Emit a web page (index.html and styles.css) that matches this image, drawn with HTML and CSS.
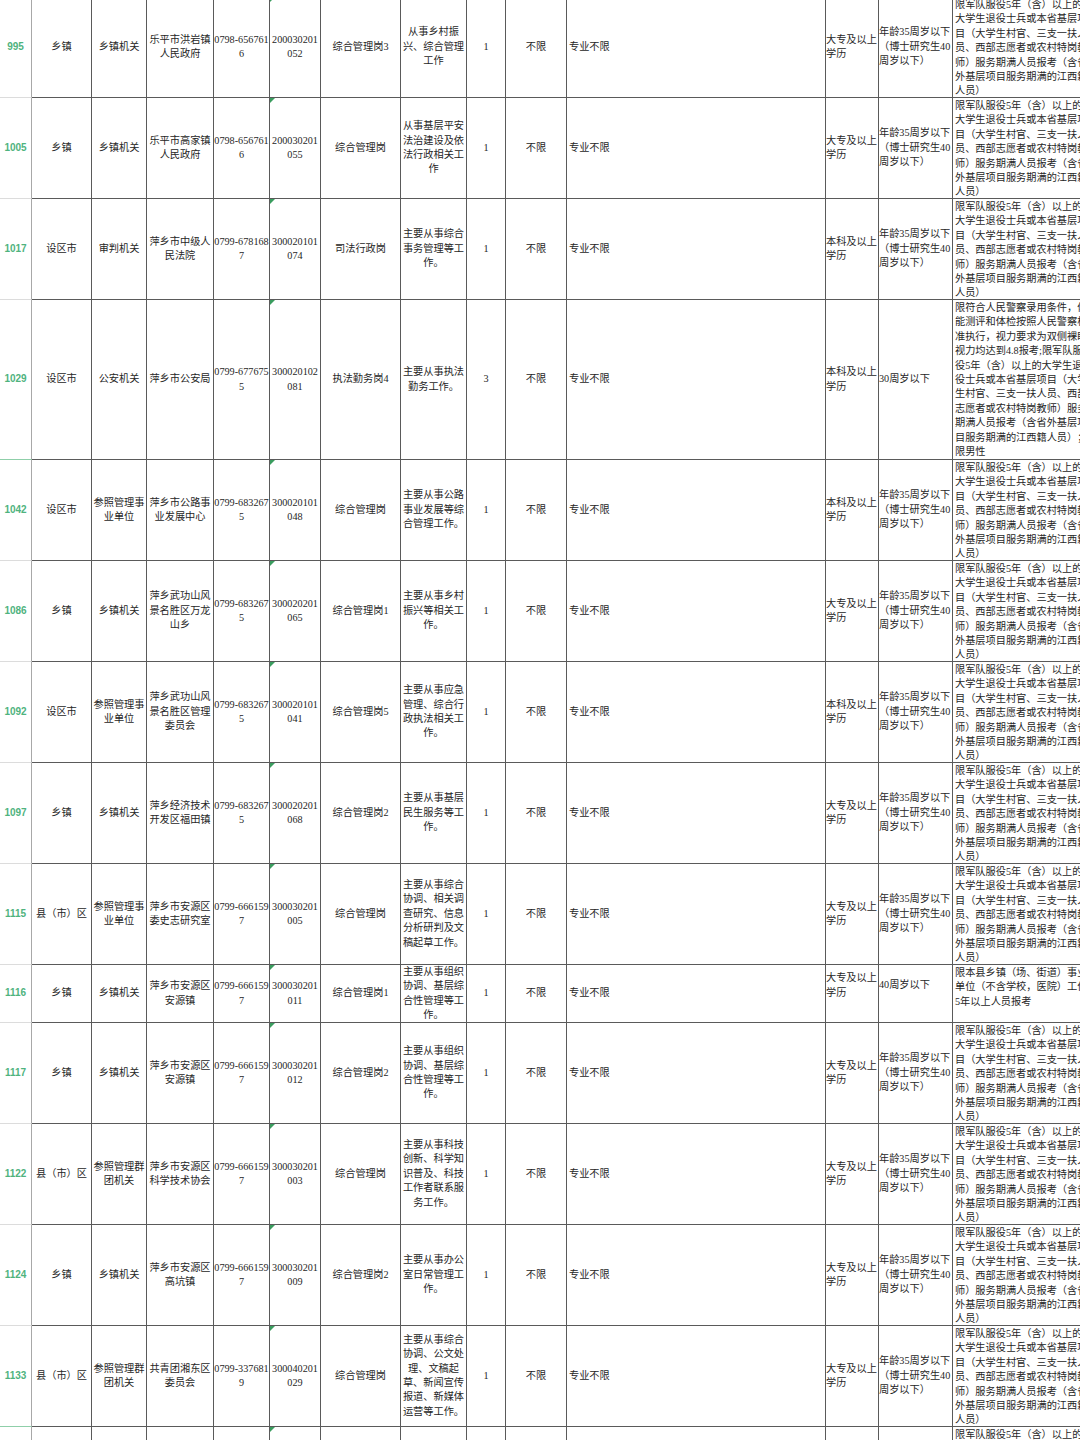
FILE: index.html
```html
<!DOCTYPE html>
<html lang="zh-CN">
<head>
<meta charset="utf-8">
<title>职位表</title>
<link rel="stylesheet" href="styles.css">
</head>
<body>
<div class="sheet">

  <div class="row">
    <div class="c n">995</div><div class="c">乡镇</div><div class="c">乡镇机关</div><div class="c">乐平市洪岩镇人民政府</div><div class="c num">0798-6567616</div><div class="c num code">200030201052</div><div class="c">综合管理岗3</div><div class="c">从事乡村振兴、综合管理工作</div><div class="c">1</div><div class="c">不限</div><div class="c l">专业不限</div><div class="c l0">大专及以上学历</div><div class="c l0">年龄35周岁以下（博士研究生40周岁以下）</div><div class="c t">限军队服役5年（含）以上的大学生退役士兵或本省基层项目（大学生村官、三支一扶人员、西部志愿者或农村特岗教师）服务期满人员报考（含省外基层项目服务期满的江西籍人员）</div>
  </div>

  <div class="row">
    <div class="c n">1005</div><div class="c">乡镇</div><div class="c">乡镇机关</div><div class="c">乐平市高家镇人民政府</div><div class="c num">0798-6567616</div><div class="c num code">200030201055</div><div class="c">综合管理岗</div><div class="c">从事基层平安法治建设及依法行政相关工作</div><div class="c">1</div><div class="c">不限</div><div class="c l">专业不限</div><div class="c l0">大专及以上学历</div><div class="c l0">年龄35周岁以下（博士研究生40周岁以下）</div><div class="c t">限军队服役5年（含）以上的大学生退役士兵或本省基层项目（大学生村官、三支一扶人员、西部志愿者或农村特岗教师）服务期满人员报考（含省外基层项目服务期满的江西籍人员）</div>
  </div>

  <div class="row">
    <div class="c n">1017</div><div class="c">设区市</div><div class="c">审判机关</div><div class="c">萍乡市中级人民法院</div><div class="c num">0799-6781687</div><div class="c num code">300020101074</div><div class="c">司法行政岗</div><div class="c">主要从事综合事务管理等工作。</div><div class="c">1</div><div class="c">不限</div><div class="c l">专业不限</div><div class="c l0">本科及以上学历</div><div class="c l0">年龄35周岁以下（博士研究生40周岁以下）</div><div class="c t">限军队服役5年（含）以上的大学生退役士兵或本省基层项目（大学生村官、三支一扶人员、西部志愿者或农村特岗教师）服务期满人员报考（含省外基层项目服务期满的江西籍人员）</div>
  </div>

  <div class="row tall">
    <div class="c n sel">1029</div><div class="c">设区市</div><div class="c">公安机关</div><div class="c">萍乡市公安局</div><div class="c num">0799-6776755</div><div class="c num code">300020102081</div><div class="c">执法勤务岗4</div><div class="c">主要从事执法勤务工作。</div><div class="c">3</div><div class="c">不限</div><div class="c l">专业不限</div><div class="c l0">本科及以上学历</div><div class="c l0">30周岁以下</div><div class="c t">限符合人民警察录用条件，体能测评和体检按照人民警察标准执行，视力要求为双侧裸眼视力均达到4.8报考;限军队服役5年（含）以上的大学生退役士兵或本省基层项目（大学生村官、三支一扶人员、西部志愿者或农村特岗教师）服务期满人员报考（含省外基层项目服务期满的江西籍人员）；限男性</div>
  </div>

  <div class="row">
    <div class="c n">1042</div><div class="c">设区市</div><div class="c">参照管理事业单位</div><div class="c">萍乡市公路事业发展中心</div><div class="c num">0799-6832675</div><div class="c num code">300020101048</div><div class="c">综合管理岗</div><div class="c">主要从事公路事业发展等综合管理工作。</div><div class="c">1</div><div class="c">不限</div><div class="c l">专业不限</div><div class="c l0">本科及以上学历</div><div class="c l0">年龄35周岁以下（博士研究生40周岁以下）</div><div class="c t">限军队服役5年（含）以上的大学生退役士兵或本省基层项目（大学生村官、三支一扶人员、西部志愿者或农村特岗教师）服务期满人员报考（含省外基层项目服务期满的江西籍人员）</div>
  </div>

  <div class="row">
    <div class="c n">1086</div><div class="c">乡镇</div><div class="c">乡镇机关</div><div class="c">萍乡武功山风景名胜区万龙山乡</div><div class="c num">0799-6832675</div><div class="c num code">300020201065</div><div class="c">综合管理岗1</div><div class="c">主要从事乡村振兴等相关工作。</div><div class="c">1</div><div class="c">不限</div><div class="c l">专业不限</div><div class="c l0">大专及以上学历</div><div class="c l0">年龄35周岁以下（博士研究生40周岁以下）</div><div class="c t">限军队服役5年（含）以上的大学生退役士兵或本省基层项目（大学生村官、三支一扶人员、西部志愿者或农村特岗教师）服务期满人员报考（含省外基层项目服务期满的江西籍人员）</div>
  </div>

  <div class="row">
    <div class="c n">1092</div><div class="c">设区市</div><div class="c">参照管理事业单位</div><div class="c">萍乡武功山风景名胜区管理委员会</div><div class="c num">0799-6832675</div><div class="c num code">300020101041</div><div class="c">综合管理岗5</div><div class="c">主要从事应急管理、综合行政执法相关工作。</div><div class="c">1</div><div class="c">不限</div><div class="c l">专业不限</div><div class="c l0">本科及以上学历</div><div class="c l0">年龄35周岁以下（博士研究生40周岁以下）</div><div class="c t">限军队服役5年（含）以上的大学生退役士兵或本省基层项目（大学生村官、三支一扶人员、西部志愿者或农村特岗教师）服务期满人员报考（含省外基层项目服务期满的江西籍人员）</div>
  </div>

  <div class="row">
    <div class="c n">1097</div><div class="c">乡镇</div><div class="c">乡镇机关</div><div class="c">萍乡经济技术开发区福田镇</div><div class="c num">0799-6832675</div><div class="c num code">300020201068</div><div class="c">综合管理岗2</div><div class="c">主要从事基层民生服务等工作。</div><div class="c">1</div><div class="c">不限</div><div class="c l">专业不限</div><div class="c l0">大专及以上学历</div><div class="c l0">年龄35周岁以下（博士研究生40周岁以下）</div><div class="c t">限军队服役5年（含）以上的大学生退役士兵或本省基层项目（大学生村官、三支一扶人员、西部志愿者或农村特岗教师）服务期满人员报考（含省外基层项目服务期满的江西籍人员）</div>
  </div>

  <div class="row">
    <div class="c n">1115</div><div class="c">县（市）区</div><div class="c">参照管理事业单位</div><div class="c">萍乡市安源区委史志研究室</div><div class="c num">0799-6661597</div><div class="c num code">300030201005</div><div class="c">综合管理岗</div><div class="c">主要从事综合协调、相关调查研究、信息分析研判及文稿起草工作。</div><div class="c">1</div><div class="c">不限</div><div class="c l">专业不限</div><div class="c l0">大专及以上学历</div><div class="c l0">年龄35周岁以下（博士研究生40周岁以下）</div><div class="c t">限军队服役5年（含）以上的大学生退役士兵或本省基层项目（大学生村官、三支一扶人员、西部志愿者或农村特岗教师）服务期满人员报考（含省外基层项目服务期满的江西籍人员）</div>
  </div>

  <div class="row short">
    <div class="c n">1116</div><div class="c">乡镇</div><div class="c">乡镇机关</div><div class="c">萍乡市安源区安源镇</div><div class="c num">0799-6661597</div><div class="c num code">300030201011</div><div class="c">综合管理岗1</div><div class="c">主要从事组织协调、基层综合性管理等工作。</div><div class="c">1</div><div class="c">不限</div><div class="c l">专业不限</div><div class="c l0">大专及以上学历</div><div class="c l0">40周岁以下</div><div class="c t">限本县乡镇（场、街道）事业单位（不含学校，医院）工作5年以上人员报考</div>
  </div>

  <div class="row">
    <div class="c n">1117</div><div class="c">乡镇</div><div class="c">乡镇机关</div><div class="c">萍乡市安源区安源镇</div><div class="c num">0799-6661597</div><div class="c num code">300030201012</div><div class="c">综合管理岗2</div><div class="c">主要从事组织协调、基层综合性管理等工作。</div><div class="c">1</div><div class="c">不限</div><div class="c l">专业不限</div><div class="c l0">大专及以上学历</div><div class="c l0">年龄35周岁以下（博士研究生40周岁以下）</div><div class="c t">限军队服役5年（含）以上的大学生退役士兵或本省基层项目（大学生村官、三支一扶人员、西部志愿者或农村特岗教师）服务期满人员报考（含省外基层项目服务期满的江西籍人员）</div>
  </div>

  <div class="row">
    <div class="c n">1122</div><div class="c">县（市）区</div><div class="c">参照管理群团机关</div><div class="c">萍乡市安源区科学技术协会</div><div class="c num">0799-6661597</div><div class="c num code">300030201003</div><div class="c">综合管理岗</div><div class="c">主要从事科技创新、科学知识普及、科技工作者联系服务工作。</div><div class="c">1</div><div class="c">不限</div><div class="c l">专业不限</div><div class="c l0">大专及以上学历</div><div class="c l0">年龄35周岁以下（博士研究生40周岁以下）</div><div class="c t">限军队服役5年（含）以上的大学生退役士兵或本省基层项目（大学生村官、三支一扶人员、西部志愿者或农村特岗教师）服务期满人员报考（含省外基层项目服务期满的江西籍人员）</div>
  </div>

  <div class="row">
    <div class="c n">1124</div><div class="c">乡镇</div><div class="c">乡镇机关</div><div class="c">萍乡市安源区高坑镇</div><div class="c num">0799-6661597</div><div class="c num code">300030201009</div><div class="c">综合管理岗2</div><div class="c">主要从事办公室日常管理工作。</div><div class="c">1</div><div class="c">不限</div><div class="c l">专业不限</div><div class="c l0">大专及以上学历</div><div class="c l0">年龄35周岁以下（博士研究生40周岁以下）</div><div class="c t">限军队服役5年（含）以上的大学生退役士兵或本省基层项目（大学生村官、三支一扶人员、西部志愿者或农村特岗教师）服务期满人员报考（含省外基层项目服务期满的江西籍人员）</div>
  </div>

  <div class="row">
    <div class="c n sel">1133</div><div class="c">县（市）区</div><div class="c">参照管理群团机关</div><div class="c">共青团湘东区委员会</div><div class="c num">0799-3376819</div><div class="c num code">300040201029</div><div class="c">综合管理岗</div><div class="c">主要从事综合协调、公文处理、文稿起草、新闻宣传报道、新媒体运营等工作。</div><div class="c">1</div><div class="c">不限</div><div class="c l">专业不限</div><div class="c l0">大专及以上学历</div><div class="c l0">年龄35周岁以下（博士研究生40周岁以下）</div><div class="c t">限军队服役5年（含）以上的大学生退役士兵或本省基层项目（大学生村官、三支一扶人员、西部志愿者或农村特岗教师）服务期满人员报考（含省外基层项目服务期满的江西籍人员）</div>
  </div>

  <div class="row">
    <div class="c n"></div><div class="c"></div><div class="c"></div><div class="c"></div><div class="c num"></div><div class="c num code"></div><div class="c"></div><div class="c"></div><div class="c"></div><div class="c"></div><div class="c l"></div><div class="c l0"></div><div class="c l0"></div><div class="c t">限军队服役5年（含）以上的大学生退役士兵或本省基层项目（大学生村官、三支一扶人员、西部志愿者或农村特岗教师）服务期满人员报考（含省外基层项目服务期满的江西籍人员）</div>
  </div>

</div>
</body>
</html>
```

FILE: styles.css
```css
html, body {
  margin: 0;
  padding: 0;
  overflow: hidden;
  background: #ffffff;
}

.sheet {
  margin-top: -3px;
  width: 1093px;
  font-family: "Liberation Serif", "Noto Sans CJK SC", serif;
  font-size: 10.2px;
  line-height: 14.4px;
  color: #262626;
  text-spacing-trim: space-all;
}

.row {
  display: grid;
  grid-template-columns: 32px 60px 55px 67px 56px 51px 80px 66px 39px 61px 259px 53px 74px 140px;
  height: 101px;
}

.row.tall {
  height: 160px;
}

.row.short {
  height: 58px;
}

.c {
  box-sizing: border-box;
  border-right: 1px solid #5a5a5a;
  border-bottom: 1px solid #5a5a5a;
  display: flex;
  align-items: center;
  justify-content: center;
  text-align: center;
  padding: 0 1px;
  overflow: hidden;
  min-width: 0;
}

.c.n {
  font-family: "Liberation Sans", "Noto Sans", sans-serif;
  font-weight: bold;
  font-size: 10px;
  color: #4fb37e;
  border-right-color: #a8a8a8;
  border-bottom-color: #dcdcdc;
  padding: 0;
}

.c.n.sel {
  border-bottom-color: #8fcfa9;
}

.c.num {
  padding: 0;
  word-break: break-all;
}

.c.code {
  position: relative;
}

.c.code::before {
  content: "";
  position: absolute;
  left: 0;
  top: 0;
  border-top: 5px solid #3a9d5f;
  border-right: 5px solid transparent;
}

.c.l {
  justify-content: flex-start;
  text-align: left;
  padding: 0 0 0 2px;
}

.c.l0 {
  justify-content: flex-start;
  text-align: left;
  padding: 0;
}

.short .c.l0 {
  padding-bottom: 16px;
}

.c.t {
  justify-content: flex-start;
  align-items: flex-start;
  text-align: left;
  padding: 1px 0 0 2px;
}
```
